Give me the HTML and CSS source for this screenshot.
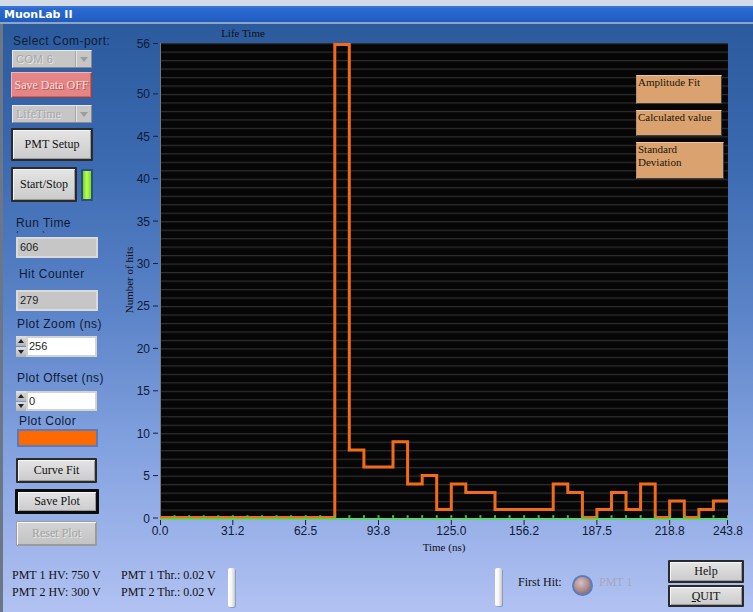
FILE: index.html
```html
<!DOCTYPE html>
<html lang="en">
<head>
<meta charset="utf-8">
<title>MuonLab II</title>
<link rel="stylesheet" href="styles.css">
</head>
<body>
<div class="frame-top"></div>
<div class="titlebar">MuonLab II</div>
<div class="window">
  <div class="main">
    <aside class="panel">
      <div class="lbl lbl-com">Select Com-port:</div>
      <div class="combo combo-com"><span class="combo-text sans">COM 6</span><span class="combo-btn"><span class="tri-down"></span></span></div>
      <button class="btn btn-save">Save Data OFF</button>
      <div class="combo combo-mode"><span class="combo-text">LifeTime</span><span class="combo-btn"><span class="tri-down"></span></span></div>
      <button class="btn btn-pmt">PMT Setup</button>
      <div class="run-row"><button class="btn btn-start">Start/Stop</button><span class="led"></span></div>
      <div class="lbl lbl-run">Run Time</div>
      <div class="unit-marks"><span class="mark mark-l"></span><span class="mark mark-r"></span></div>
      <div class="field field-run">606</div>
      <div class="lbl lbl-hit">Hit Counter</div>
      <div class="field field-hit">279</div>
      <div class="lbl lbl-zoom">Plot Zoom (ns)</div>
      <div class="numeric numeric-zoom"><span class="spin"><span class="spin-up"><span class="tri-up-s"></span></span><span class="spin-dn"><span class="tri-dn-s"></span></span></span><span class="num-field">256</span></div>
      <div class="lbl lbl-offset">Plot Offset (ns)</div>
      <div class="numeric numeric-offset"><span class="spin"><span class="spin-up"><span class="tri-up-s"></span></span><span class="spin-dn"><span class="tri-dn-s"></span></span></span><span class="num-field">0</span></div>
      <div class="lbl lbl-color">Plot Color</div>
      <div class="color-box"></div>
      <button class="btn btn-curve">Curve Fit</button>
      <button class="btn btn-saveplot">Save Plot</button>
      <button class="btn btn-reset">Reset Plot</button>
    </aside>
    <section class="chart">
      <svg class="plot" width="645" height="532" viewBox="0 0 645 532">
        <defs>
          <pattern id="grid" x="0" y="494" width="20" height="8.482" patternUnits="userSpaceOnUse">
            <rect x="0" y="0" width="20" height="1.2" fill="#2e2e2e"/>
          </pattern>
        </defs>
        <text class="chart-title" x="135" y="13" text-anchor="middle">Life Time</text>
        <rect x="52" y="19" width="568" height="475" fill="#060606"/>
        <rect x="52" y="19" width="568" height="475" fill="url(#grid)"/>
        <line x1="52.5" y1="19" x2="52.5" y2="494" stroke="#7a7a7a" stroke-width="1"/>
        <path class="hist" d="M52 493.5H226.8V20.5H241.3V426.1H255.9V443.1H285V417.7H299.6V460.1H314.2V451.6H328.7V485.5H343.3V460.1H357.8V468.6H387V485.5H445.2V460.1H459.8V468.6H474.4V493.5H488.9V485.5H503.5V468.6H518V485.5H532.6V460.1H547.2V493.5H561.7V477H576.3V493.5H590.9V485.5H605.4V477H620"/>
        <line x1="52" y1="495" x2="620" y2="495" stroke="#49e04a" stroke-width="1.6"/>
        <line x1="65.6" y1="492.5" x2="620" y2="492.5" stroke="#3fcf3a" stroke-width="2.5" stroke-dasharray="2 12.564"/>
        <path class="ticks" d="M45 494H50M45 451.6H50M45 409.2H50M45 366.8H50M45 324.4H50M45 282H50M45 239.5H50M45 197.1H50M45 154.7H50M45 112.3H50M45 69.9H50M45 19.5H50"/>
        <g class="tick-lbl" text-anchor="end">
          <text x="42" y="498.5">0</text>
          <text x="42" y="456">5</text>
          <text x="42" y="413.6">10</text>
          <text x="42" y="371.2">15</text>
          <text x="42" y="328.8">20</text>
          <text x="42" y="286.4">25</text>
          <text x="42" y="244">30</text>
          <text x="42" y="201.6">35</text>
          <text x="42" y="159.2">40</text>
          <text x="42" y="116.8">45</text>
          <text x="42" y="74.4">50</text>
          <text x="42" y="24">56</text>
        </g>
        <path class="ticks" d="M52.5 496V501M124.8 496V501M197.6 496V501M270.5 496V501M343.3 496V501M416.1 496V501M488.9 496V501M561.7 496V501M619.5 496V501"/>
        <g class="tick-lbl" text-anchor="middle">
          <text x="52" y="511">0.0</text>
          <text x="124.8" y="511">31.2</text>
          <text x="197.6" y="511">62.5</text>
          <text x="270.5" y="511">93.8</text>
          <text x="343.3" y="511">125.0</text>
          <text x="416.1" y="511">156.2</text>
          <text x="488.9" y="511">187.5</text>
          <text x="561.7" y="511">218.8</text>
          <text x="620" y="511">243.8</text>
        </g>
        <text class="axis-title" x="336" y="527" text-anchor="middle">Time (ns)</text>
        <text class="axis-title" transform="translate(24.5 256) rotate(-90)" text-anchor="middle">Number of hits</text>
      </svg>
      <div class="legend-box legend-amp">Amplitude Fit</div>
      <div class="legend-box legend-calc">Calculated value</div>
      <div class="legend-box legend-std">Standard<br>Deviation</div>
    </section>
  </div>
  <footer class="status">
    <div class="hv">PMT 1 HV: 750 V<br>PMT 2 HV: 300 V</div>
    <div class="thr">PMT 1 Thr.: 0.02 V<br>PMT 2 Thr.: 0.02 V</div>
    <span class="slider"></span>
    <span class="slider slider-2"></span>
    <span class="firsthit">First Hit:</span>
    <span class="round-led"></span>
    <span class="pmt-off">PMT 1</span>
    <div class="sys-btns">
      <button class="btn btn-help">Help</button>
      <button class="btn btn-quit"><u>Q</u>UIT</button>
    </div>
  </footer>
</div>
</body>
</html>
```
FILE: styles.css
```css
html, body {
  margin: 0;
  padding: 0;
}
body {
  width: 753px;
  height: 612px;
  overflow: hidden;
  background: #c9d5e6;
  font-family: "Liberation Sans", Arial, sans-serif;
}

.frame-top {
  height: 6px;
  background: #d2dbe8;
  border-bottom: 2px solid #3a74d0;
}
.titlebar {
  height: 14px;
  background: linear-gradient(#2b6bd2, #1f5cbf);
  color: #fff;
  font: bold 11px/14px "DejaVu Sans", sans-serif;
  padding-left: 4px;
  border-bottom: 2px solid #8fa3c2;
}

.window {
  display: flex;
  flex-direction: column;
  height: 588px;
  border-left: 3px solid #6b7689;
  background: linear-gradient(180deg, #2b5a9d 0%, #3a69b0 22%, #5d85c9 50%, #88a5e2 75%, #b2c2f2 100%);
}
.main {
  display: flex;
  height: 532px;
}

/* ---------- left panel ---------- */
.panel {
  width: 105px;
  display: flex;
  flex-direction: column;
  align-items: flex-start;
}
.lbl {
  font-size: 12px;
  line-height: 14px;
  height: 14px;
  letter-spacing: 0.45px;
  color: #0e1b36;
  white-space: nowrap;
}
.lbl-com { margin: 10px 0 0 10px; }
.lbl-run { margin: 14px 0 0 13px; }
.unit-marks {
  display: flex;
  height: 3px;
  margin: 0 0 0 14px;
  width: 27px;
  justify-content: space-between;
}
.mark {
  width: 1px;
  height: 2px;
  margin-top: 1px;
  background: #2a3550;
}
.mark-l { transform: skewX(-30deg); }
.mark-r { transform: skewX(30deg); }
.lbl-hit { margin: 9px 0 0 16px; }
.lbl-zoom { margin: 6px 0 0 14px; }
.lbl-offset { margin: 14px 0 0 14px; }
.lbl-color { margin: 3px 0 0 16px; }

.combo {
  box-sizing: border-box;
  width: 80px;
  height: 18px;
  display: flex;
  background: #c6c6c6;
  border: 1px solid;
  border-color: #e8e8e8 #8a8a8a #8a8a8a #e8e8e8;
  margin-left: 9px;
}
.combo-com { margin-top: 2px; }
.combo-mode { margin-top: 7px; }
.combo-text {
  flex: 1;
  font: 12px/16px "Liberation Serif", serif;
  color: #a6a6a6;
  padding-left: 3px;
  text-shadow: 1px 1px 0 #e6e6e6;
}
.combo-text.sans {
  font: 11px/16px "Liberation Sans", sans-serif;
  letter-spacing: 0.5px;
}
.combo-btn {
  width: 15px;
  border-left: 1px solid #a6a6a6;
  box-shadow: inset 1px 0 0 #e4e4e4;
  display: flex;
  align-items: center;
  justify-content: center;
}
.tri-down {
  width: 0;
  height: 0;
  border-left: 4px solid transparent;
  border-right: 4px solid transparent;
  border-top: 5px solid #9c9c9c;
}

.btn {
  box-sizing: border-box;
  padding: 0;
  font: 12px "Liberation Serif", serif;
  color: #111;
  background: linear-gradient(#e4e4e4, #cbcbcb);
  border: 2px solid #2a2a2a;
  border-radius: 1px;
  box-shadow: inset 1px 1px 0 #f6f6f6, inset -1px -1px 0 #9a9a9a;
  cursor: default;
}
.btn-save {
  margin: 4px 0 0 8px;
  width: 81px;
  height: 26px;
  background: #e68585;
  border: 1px solid;
  border-color: #f4b4b4 #8e4848 #8e4848 #f4b4b4;
  box-shadow: inset -1px -1px 0 #c06464;
  color: #fbdede;
  text-shadow: 1px 1px 0 #b05656;
}
.btn-pmt {
  margin: 5px 0 0 8px;
  width: 82px;
  height: 33px;
}
.run-row {
  display: flex;
  align-items: flex-start;
  margin: 6px 0 0 8px;
}
.btn-start {
  width: 66px;
  height: 35px;
}
.led {
  box-sizing: border-box;
  width: 12px;
  height: 32px;
  margin: 2px 0 0 4px;
  border: 2px solid #2d4f85;
  background: linear-gradient(90deg, #74d41a, #b8ff52 45%, #7fdc20);
}

.field {
  box-sizing: border-box;
  width: 82px;
  height: 21px;
  margin-left: 13px;
  background: #c6c6c6;
  border: 2px solid #dadada;
  font: 11px/17px "Liberation Sans", sans-serif;
  color: #1e1e1e;
  padding-left: 2px;
}
.field-run { margin-top: 4px; }
.field-hit { margin-top: 9px; }

.numeric {
  display: flex;
  height: 21px;
  margin-left: 13px;
}
.numeric-zoom { margin-top: 5px; }
.numeric-offset { margin-top: 6px; height: 20px; }
.spin {
  width: 10px;
  display: flex;
  flex-direction: column;
  gap: 1px;
}
.spin-up, .spin-dn {
  flex: 1;
  background: linear-gradient(#e0e0e0, #b4b4b4);
  display: flex;
  align-items: center;
  justify-content: center;
}
.tri-up-s {
  width: 0; height: 0;
  border-left: 3px solid transparent;
  border-right: 3px solid transparent;
  border-bottom: 4px solid #222;
}
.tri-dn-s {
  width: 0; height: 0;
  border-left: 3px solid transparent;
  border-right: 3px solid transparent;
  border-top: 4px solid #222;
}
.num-field {
  box-sizing: border-box;
  width: 71px;
  background: #fff;
  border: 2px solid #d2d2d2;
  font: 11px/16px "Liberation Sans", sans-serif;
  color: #1e1e1e;
  padding-left: 1px;
}

.color-box {
  box-sizing: border-box;
  width: 81px;
  height: 18px;
  margin: 1px 0 0 14px;
  border: 2px solid #5a7bbb;
  background: #ff6a00;
}
.btn-curve {
  margin: 11px 0 0 13px;
  width: 81px;
  height: 25px;
}
.btn-saveplot {
  margin: 6px 0 0 12px;
  width: 84px;
  height: 25px;
  border: 3px solid #0c0c0c;
}
.btn-reset {
  margin: 7px 0 0 13px;
  width: 81px;
  height: 25px;
  border: 1px solid #9c9c9c;
  background: linear-gradient(#d4d4d4, #c2c2c2);
  color: #a2a2a2;
  text-shadow: 1px 1px 0 #e8e8e8;
}

/* ---------- chart ---------- */
.chart {
  position: relative;
  width: 645px;
  height: 532px;
}
.plot { display: block; }
.hist {
  fill: none;
  stroke: #f26c18;
  stroke-width: 3;
  stroke-linejoin: miter;
}
.ticks {
  fill: none;
  stroke: #16213d;
  stroke-width: 1;
}
.tick-lbl text {
  font: 12px "Liberation Sans", Arial, sans-serif;
  fill: #0f1a36;
}
.chart-title, .axis-title {
  font: 11px "Liberation Serif", serif;
  fill: #111;
}
.legend-box {
  position: absolute;
  left: 528px;
  width: 86px;
  box-sizing: border-box;
  background: #d9a26e;
  border: 1px solid;
  border-color: #ecc9a6 #3f3f3f #3f3f3f #c89060;
  font: 11px/13px "Liberation Serif", serif;
  color: #24150a;
  padding-left: 1px;
}
.legend-amp { top: 51px; height: 29px; }
.legend-calc { top: 86px; height: 26px; }
.legend-std { top: 118px; height: 37px; width: 88px; }

/* ---------- status ---------- */
.status {
  display: flex;
  align-items: flex-start;
  height: 56px;
  font: 12px/17px "Liberation Serif", serif;
  color: #111;
}
.hv {
  margin: 11px 0 0 9px;
  width: 109px;
  white-space: nowrap;
}
.thr {
  margin-top: 11px;
  width: 107px;
  white-space: nowrap;
}
.slider {
  width: 7px;
  height: 39px;
  margin-top: 12px;
  border-radius: 2px;
  background: linear-gradient(90deg, #ffffff, #f6f6f6 50%, #c8c8c8);
  box-shadow: 1px 1px 0 #8a9cc4;
}
.slider-2 {
  margin-left: 260px;
  height: 38px;
}
.firsthit {
  margin: 18px 0 0 16px;
  width: 54px;
  white-space: nowrap;
}
.round-led {
  box-sizing: border-box;
  width: 21px;
  height: 21px;
  margin-top: 19px;
  border-radius: 50%;
  border: 2px solid #5d7cbd;
  background: radial-gradient(circle at 40% 35%, #d8c0c0, #a88888 55%, #6e5656);
}
.pmt-off {
  margin: 18px 0 0 6px;
  color: #a3a8bc;
}
.sys-btns {
  margin: 4px 9px 0 auto;
  display: flex;
  flex-direction: column;
  gap: 2px;
}
.btn-help {
  width: 76px;
  height: 23px;
}
.btn-quit {
  width: 76px;
  height: 22px;
}
```
